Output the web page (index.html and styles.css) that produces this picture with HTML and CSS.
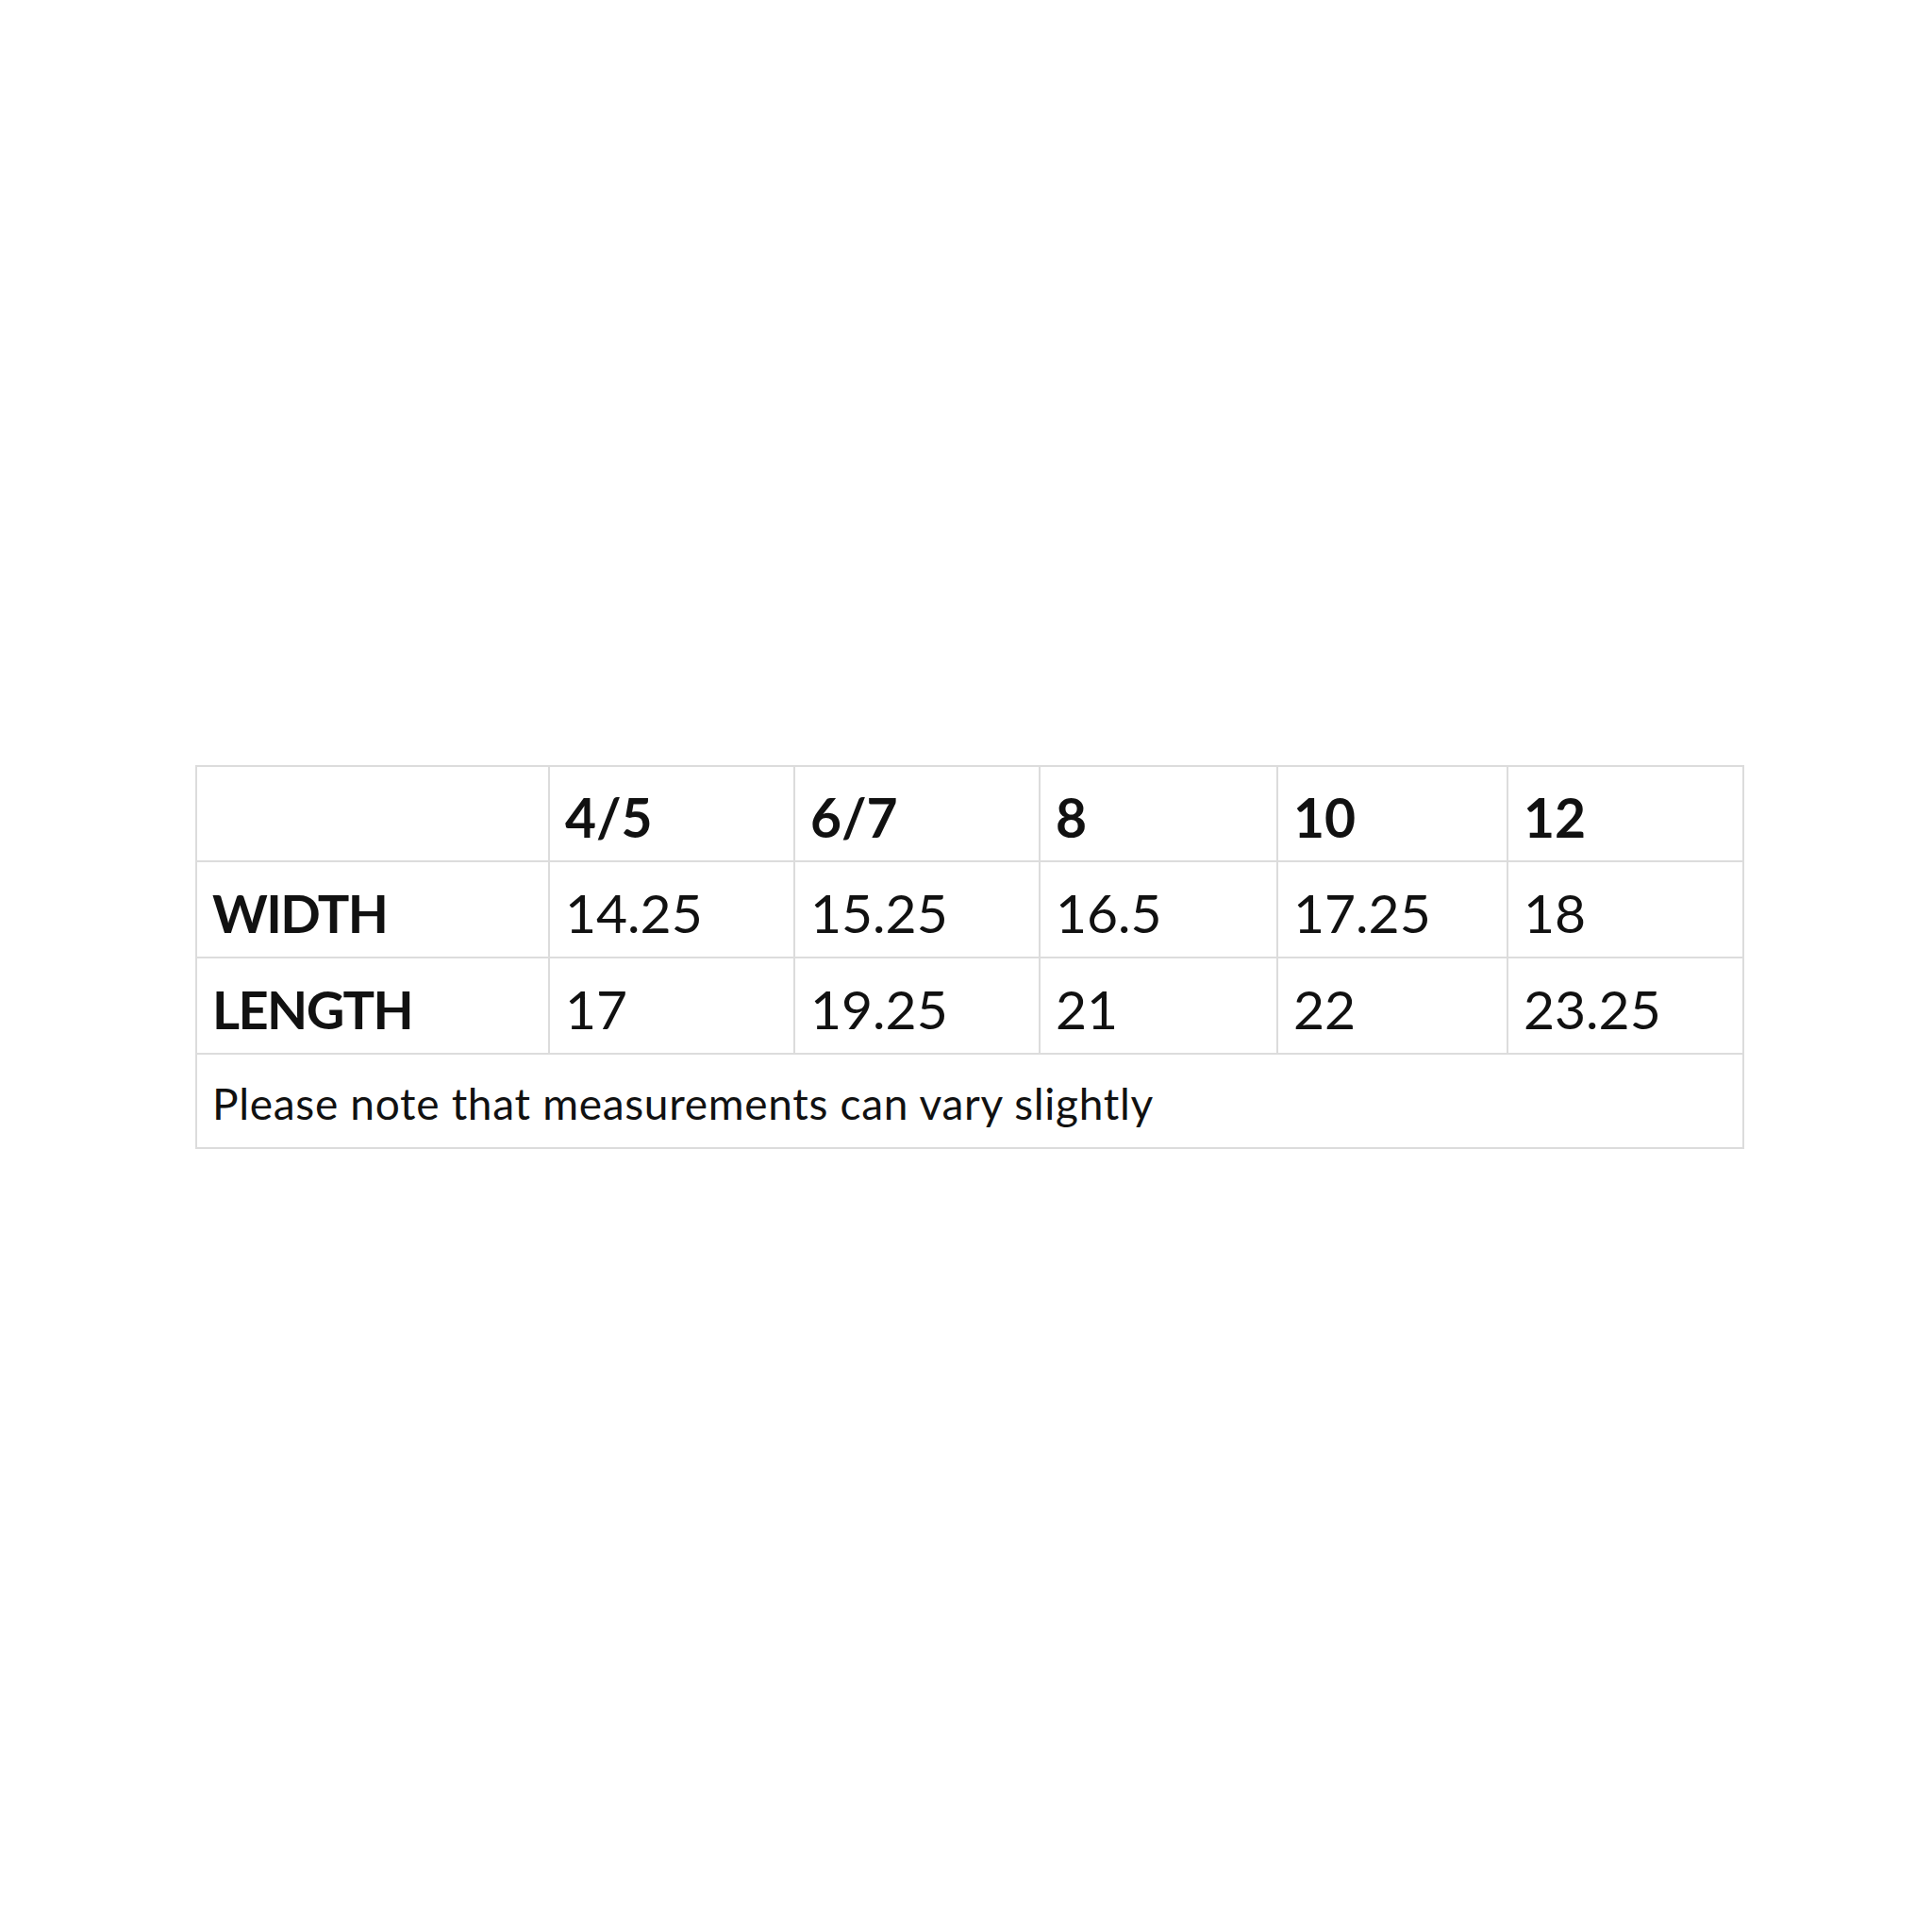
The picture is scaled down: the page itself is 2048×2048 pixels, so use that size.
FILE: index.html
```html
<!DOCTYPE html>
<html>
<head>
<meta charset="utf-8">
<link rel="stylesheet" href="styles.css">
</head>
<body>
<table class="size-chart">
  <colgroup>
    <col class="c-label">
    <col class="c-a">
    <col class="c-b">
    <col class="c-c">
    <col class="c-d">
    <col class="c-e">
  </colgroup>
  <tr class="row head">
    <td></td>
    <td>4/5</td>
    <td>6/7</td>
    <td>8</td>
    <td>10</td>
    <td>12</td>
  </tr>
  <tr class="row data">
    <td class="label">WIDTH</td>
    <td>14.25</td>
    <td>15.25</td>
    <td>16.5</td>
    <td>17.25</td>
    <td>18</td>
  </tr>
  <tr class="row data">
    <td class="label">LENGTH</td>
    <td>17</td>
    <td>19.25</td>
    <td>21</td>
    <td>22</td>
    <td>23.25</td>
  </tr>
  <tr class="row note">
    <td colspan="6">Please note that measurements can vary slightly</td>
  </tr>
</table>
</body>
</html>
```
FILE: styles.css
```css
html, body {
  margin: 0;
  padding: 0;
  background: #ffffff;
}

body {
  padding-top: 811px;
  padding-left: 207px;
  font-family: "Lato", "Liberation Sans", sans-serif;
  color: #111111;
}

.size-chart {
  border-collapse: collapse;
  table-layout: fixed;
  width: 1640px;
}

.c-label { width: 374px; }
.c-a { width: 260px; }
.c-b { width: 260px; }
.c-c { width: 252px; }
.c-d { width: 244px; }
.c-e { width: 250px; }

.size-chart td {
  border: 2px solid #dcdcdc;
  padding: 0 0 0 16px;
  vertical-align: middle;
  white-space: nowrap;
}

.row.head td {
  height: 93px;
  font-size: 57px;
  font-weight: 700;
  padding-top: 6px;
}

.row.data td {
  height: 94px;
  font-size: 57px;
  font-weight: 400;
  padding-top: 6px;
}

.row.data td.label {
  font-weight: 700;
  font-size: 56px;
  letter-spacing: -1.6px;
}

.row.note td {
  height: 94px;
  font-size: 46px;
  letter-spacing: 0.7px;
  padding-top: 4px;
}
```
